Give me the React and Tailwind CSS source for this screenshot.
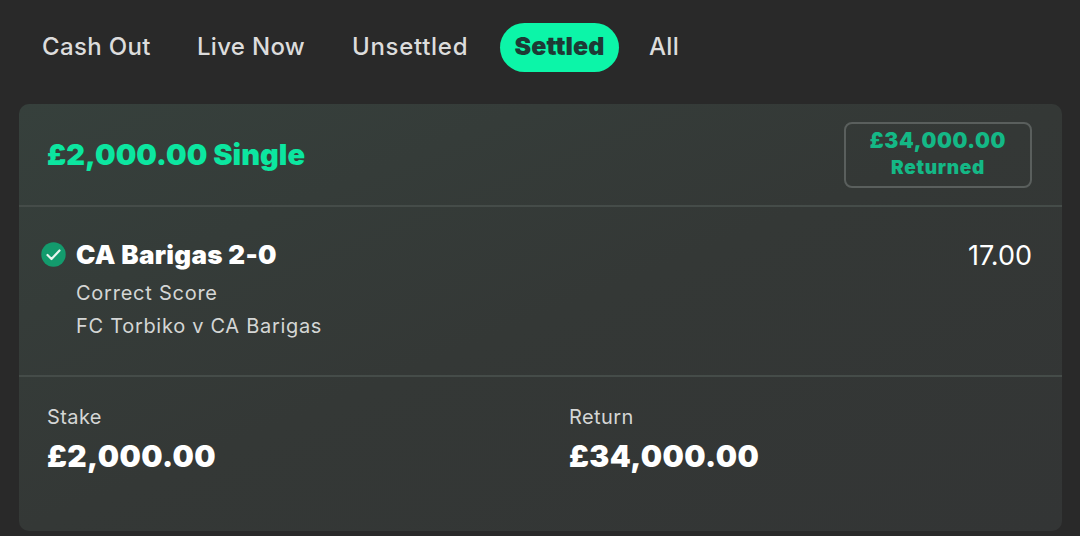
import React from "react";

const Tab = ({ children, active, className = "" }) => (
  <div
    className={
      active
        ? "h-[49px] w-[119px] flex items-center justify-center rounded-full bg-[#0cf5a8] text-[#1d3a35] text-[25px] font-black tracking-[0.1px] pb-[2px] " + className
        : "text-[#dcdcdc] text-[24px] font-medium pb-[2px] " + className
    }
  >
    {children}
  </div>
);

export default function App() {
  return (
    <div className="w-[1080px] h-[536px] overflow-hidden bg-[#292929] font-['Inter',sans-serif] px-[19px] pt-[23px]">
      <nav className="flex items-center h-[49px] pl-[23px]">
        <Tab className="w-[155px] tracking-[0.35px]">Cash Out</Tab>
        <Tab className="w-[155px] tracking-[0.3px]">Live Now</Tab>
        <Tab className="w-[148px] tracking-[0.7px]">Unsettled</Tab>
        <Tab active>Settled</Tab>
        <Tab className="ml-[30px] tracking-[0.3px]">All</Tab>
      </nav>

      <section className="mt-[32px] w-[1043px] h-[427px] rounded-[10px] bg-gradient-to-br from-[#36403c] via-[#343836] to-[#333535] flex flex-col">
        <header className="h-[103px] shrink-0 border-b-2 border-[#454c49] flex items-center justify-between pl-[28px] pr-[30px]">
          <h2 className="text-[#0ce6a0] text-[29px] font-black tracking-[0.05px] pt-[1px]">£2,000.00 Single</h2>
          <div className="w-[188px] h-[66px] rounded-[8px] border-2 border-[#5a5f5d] flex flex-col items-center justify-center text-[#14b886] font-black">
            <span className="text-[21px] leading-[26px] tracking-[0.6px]">£34,000.00</span>
            <span className="text-[19px] leading-[26px] tracking-[0.7px] pt-[1px]">Returned</span>
          </div>
        </header>

        <div className="h-[170px] shrink-0 border-b-2 border-[#454c49] pl-[23px] pr-[30px] pt-[33px] flex justify-between">
          <div className="flex">
            <svg className="w-[25px] h-[25px] mt-[2px] -ml-[1px] mr-[10px] shrink-0" viewBox="0 0 25 25" aria-hidden="true">
              <circle cx="12.5" cy="12.5" r="12.2" fill="#139b6d" />
              <path d="M6.5 13l4 4L18.5 8.5" fill="none" stroke="#e8f5ef" strokeWidth="2.2" strokeLinecap="round" strokeLinejoin="round" />
            </svg>
            <div>
              <div className="text-white text-[26px] font-black leading-[32px] tracking-[0.3px] -mt-[1px]">CA Barigas 2-0</div>
              <div className="mt-[6px] text-[#d4d6d5] text-[20px] leading-[33px] tracking-[0.75px]">Correct Score</div>
              <div className="text-[#d4d6d5] text-[20px] leading-[33px] tracking-[0.7px]">FC Torbiko v CA Barigas</div>
            </div>
          </div>
          <div className="text-white text-[27px] leading-[32px]">17.00</div>
        </div>

        <div className="flex pl-[28px] pt-[26px]">
          <div className="w-[522px]">
            <div className="text-[#d4d6d5] text-[20px] leading-[28px] tracking-[0.4px]">Stake</div>
            <div className="mt-[6px] text-white text-[30px] font-black leading-[38px] tracking-[0.4px]">£2,000.00</div>
          </div>
          <div>
            <div className="text-[#d4d6d5] text-[20px] leading-[28px] tracking-[0.4px]">Return</div>
            <div className="mt-[6px] text-white text-[30px] font-black leading-[38px] tracking-[0.4px]">£34,000.00</div>
          </div>
        </div>
      </section>
    </div>
  );
}
